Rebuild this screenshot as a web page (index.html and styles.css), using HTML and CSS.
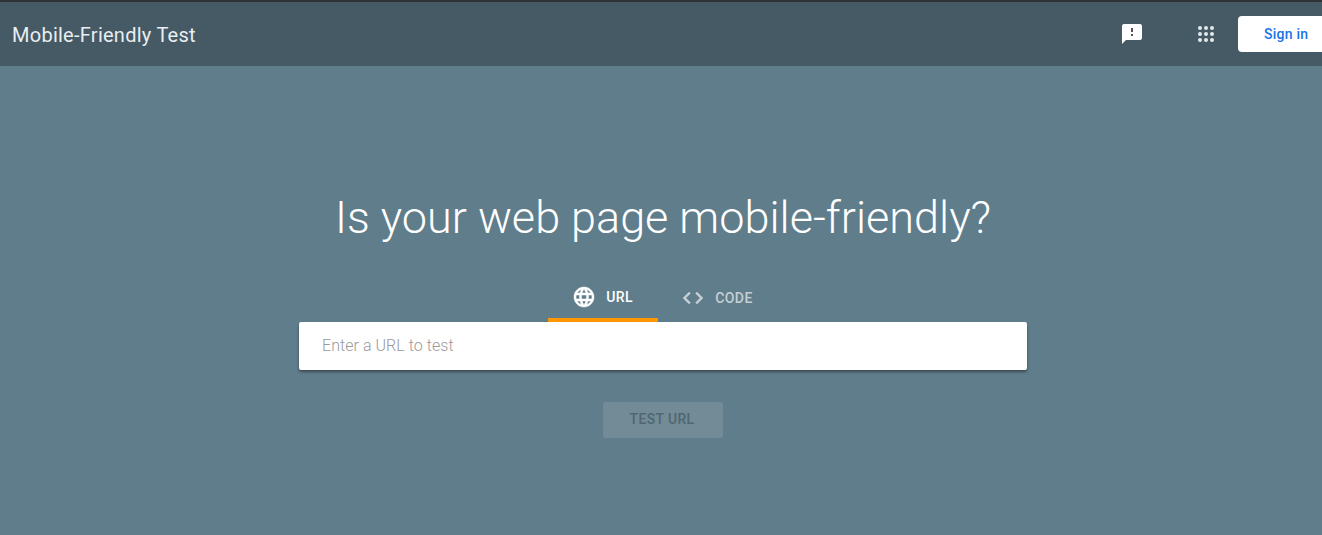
FILE: index.html
```html
<!DOCTYPE html>
<html lang="en">
<head>
    <meta charset="UTF-8">
    <meta name="viewport" content="width=device-width, initial-scale=1.0">
    <title>Mobile-Friendly Test</title>
    <link rel="stylesheet" href="styles.css">
</head>
<body>
<header class="top-bar">
    <span class="app-title">Mobile-Friendly Test</span>
    <div class="top-actions">
        <button type="button" class="icon-btn feedback-btn" aria-label="Feedback">
            <svg width="24" height="24" viewBox="0 0 24 24"><path fill="#fff" d="M20 2H4c-1.1 0-2 .9-2 2v18l4-4h14c1.1 0 2-.9 2-2V4c0-1.100-.9-2-2-2z"/><path fill="#5f4a5c" d="M13 14h-2v-2h2zm0-4h-2V6h2z"/></svg>
        </button>
        <button type="button" class="icon-btn apps-btn" aria-label="Apps">
            <svg width="24" height="24" viewBox="0 0 24 24" fill="#e3e8ea"><circle cx="6" cy="6" r="2"/><circle cx="12" cy="6" r="2"/><circle cx="18" cy="6" r="2"/><circle cx="6" cy="12" r="2"/><circle cx="12" cy="12" r="2"/><circle cx="18" cy="12" r="2"/><circle cx="6" cy="18" r="2"/><circle cx="12" cy="18" r="2"/><circle cx="18" cy="18" r="2"/></svg>
        </button>
        <a href="#" class="sign-in">Sign in</a>
    </div>
</header>

<main class="hero">
    <h1>Is your web page mobile-friendly?</h1>
    <div class="tabs">
        <div class="tab active">
            <svg width="24" height="24" viewBox="0 0 24 24"><path fill="#fff" stroke="#fff" stroke-width="0.5" d="M11.990 2C6.470 2 2 6.480 2 12s4.470 10 9.990 10C17.520 22 22 17.520 22 12S17.520 2 11.990 2zm6.930 6h-2.950c-.32-1.250-.78-2.450-1.380-3.560 1.840.63 3.370 1.910 4.330 3.560zM12 4.040c.83 1.200 1.480 2.530 1.910 3.960h-3.820c.43-1.430 1.080-2.760 1.910-3.960zM4.260 14C4.100 13.360 4 12.690 4 12s.1-1.360.26-2h3.380c-.08.66-.14 1.320-.14 2s.06 1.340.14 2H4.260zm.82 2h2.950c.32 1.250.78 2.450 1.380 3.560-1.840-.63-3.370-1.900-4.330-3.560zm2.950-8H5.080c.96-1.660 2.490-2.930 4.330-3.560C8.810 5.550 8.350 6.750 8.030 8zM12 19.960c-.83-1.200-1.480-2.530-1.910-3.960h3.820c-.43 1.430-1.080 2.760-1.910 3.960zM14.340 14H9.660c-.09-.66-.16-1.320-.16-2s.07-1.350.16-2h4.680c.09.650.16 1.320.16 2s-.07 1.340-.16 2zm.25 5.560c.6-1.110 1.060-2.310 1.380-3.560h2.950c-.96 1.650-2.490 2.930-4.330 3.560zM16.360 14c.08-.66.14-1.320.14-2s-.06-1.340-.14-2h3.380c.16.640.26 1.310.26 2s-.1 1.360-.26 2h-3.380z"/></svg>
            <span>URL</span>
        </div>
        <div class="tab code-tab">
            <svg width="24" height="24" viewBox="0 0 24 24"><path fill="#c5cfd4" stroke="#c5cfd4" stroke-width="0.5" d="M9.400 16.600 4.800 12l4.600-4.600L8 6l-6 6 6 6 1.400-1.400zm5.200 0 4.600-4.600-4.600-4.600L16 6l6 6-6 6-1.400-1.400z"/></svg>
            <span>CODE</span>
        </div>
    </div>
    <div class="url-box">
        <input type="text" class="url-input" placeholder="Enter a URL to test">
    </div>
    <button type="button" class="test-btn" disabled>TEST URL</button>
</main>
</body>
</html>
```

FILE: styles.css
```css
* {
    margin: 0;
    padding: 0;
    box-sizing: border-box;
    font-family: Roboto, sans-serif;
}
html, body {
    height: 100%;
    overflow: hidden;
}
body {
    background: #607d8b;
    display: flex;
    flex-direction: column;
}
.top-bar {
    height: 66px;
    background: #455a64;
    border-top: 2px solid #2f3336;
    display: flex;
    align-items: center;
    justify-content: space-between;
    padding-left: 12px;
    color: #eceff1;
}
.app-title {
    font-size: 20px;
    letter-spacing: 0.26px;
    padding-top: 2px;
    color: #e8eef1;
}
.top-actions {
    display: flex;
    align-items: center;
}
.icon-btn {
    background: none;
    border: none;
    width: 24px;
    height: 24px;
}
.feedback-btn {
    margin-right: 50px;
}
.apps-btn {
    margin-right: 20px;
}
.sign-in {
    width: 84px;
    height: 36px;
    background: #fff;
    border-radius: 4px 0 0 4px;
    color: #1a73e8;
    font-size: 14px;
    font-weight: 500;
    letter-spacing: 0.25px;
    text-decoration: none;
    display: flex;
    align-items: center;
    padding-left: 26px;
}
.hero {
    display: flex;
    flex-direction: column;
    align-items: center;
    padding: 122px 0 0 4px;
}
.hero h1 {
    font-size: 45px;
    font-weight: 300;
    line-height: 60px;
    color: #fff;
}
.tabs {
    display: flex;
    margin-top: 30px;
    width: 230px;
}
.tab {
    width: 110px;
    height: 44px;
    display: flex;
    align-items: center;
    justify-content: center;
    gap: 10px;
    padding: 0 2px 4px 0;
    font-size: 14px;
    font-weight: 500;
    letter-spacing: 0.4px;
    color: #c5cfd4;
}
.tab.active {
    color: #fff;
    border-bottom: 4px solid #ff9800;
    padding: 0 1px 2px 0;
}
.code-tab {
    width: 120px;
}
.url-box {
    width: 728px;
    height: 48px;
    background: #fff;
    border-radius: 2px;
    box-shadow: 0 2px 3px rgba(0, 0, 0, 0.4);
}
.url-input {
    width: 100%;
    height: 100%;
    border: none;
    background: none;
    outline: none;
    padding: 0 23px 2px;
    font-size: 16px;
    font-weight: 300;
    letter-spacing: 0.05px;
}
.url-input::placeholder {
    color: #9a9a9a;
}
.test-btn {
    width: 120px;
    height: 36px;
    margin-top: 32px;
    padding: 0 2px 2px 0;
    background: #728b97;
    border: none;
    border-radius: 3px;
    color: #51666f;
    font-size: 14px;
    font-weight: 500;
    letter-spacing: 0.35px;
}
```
